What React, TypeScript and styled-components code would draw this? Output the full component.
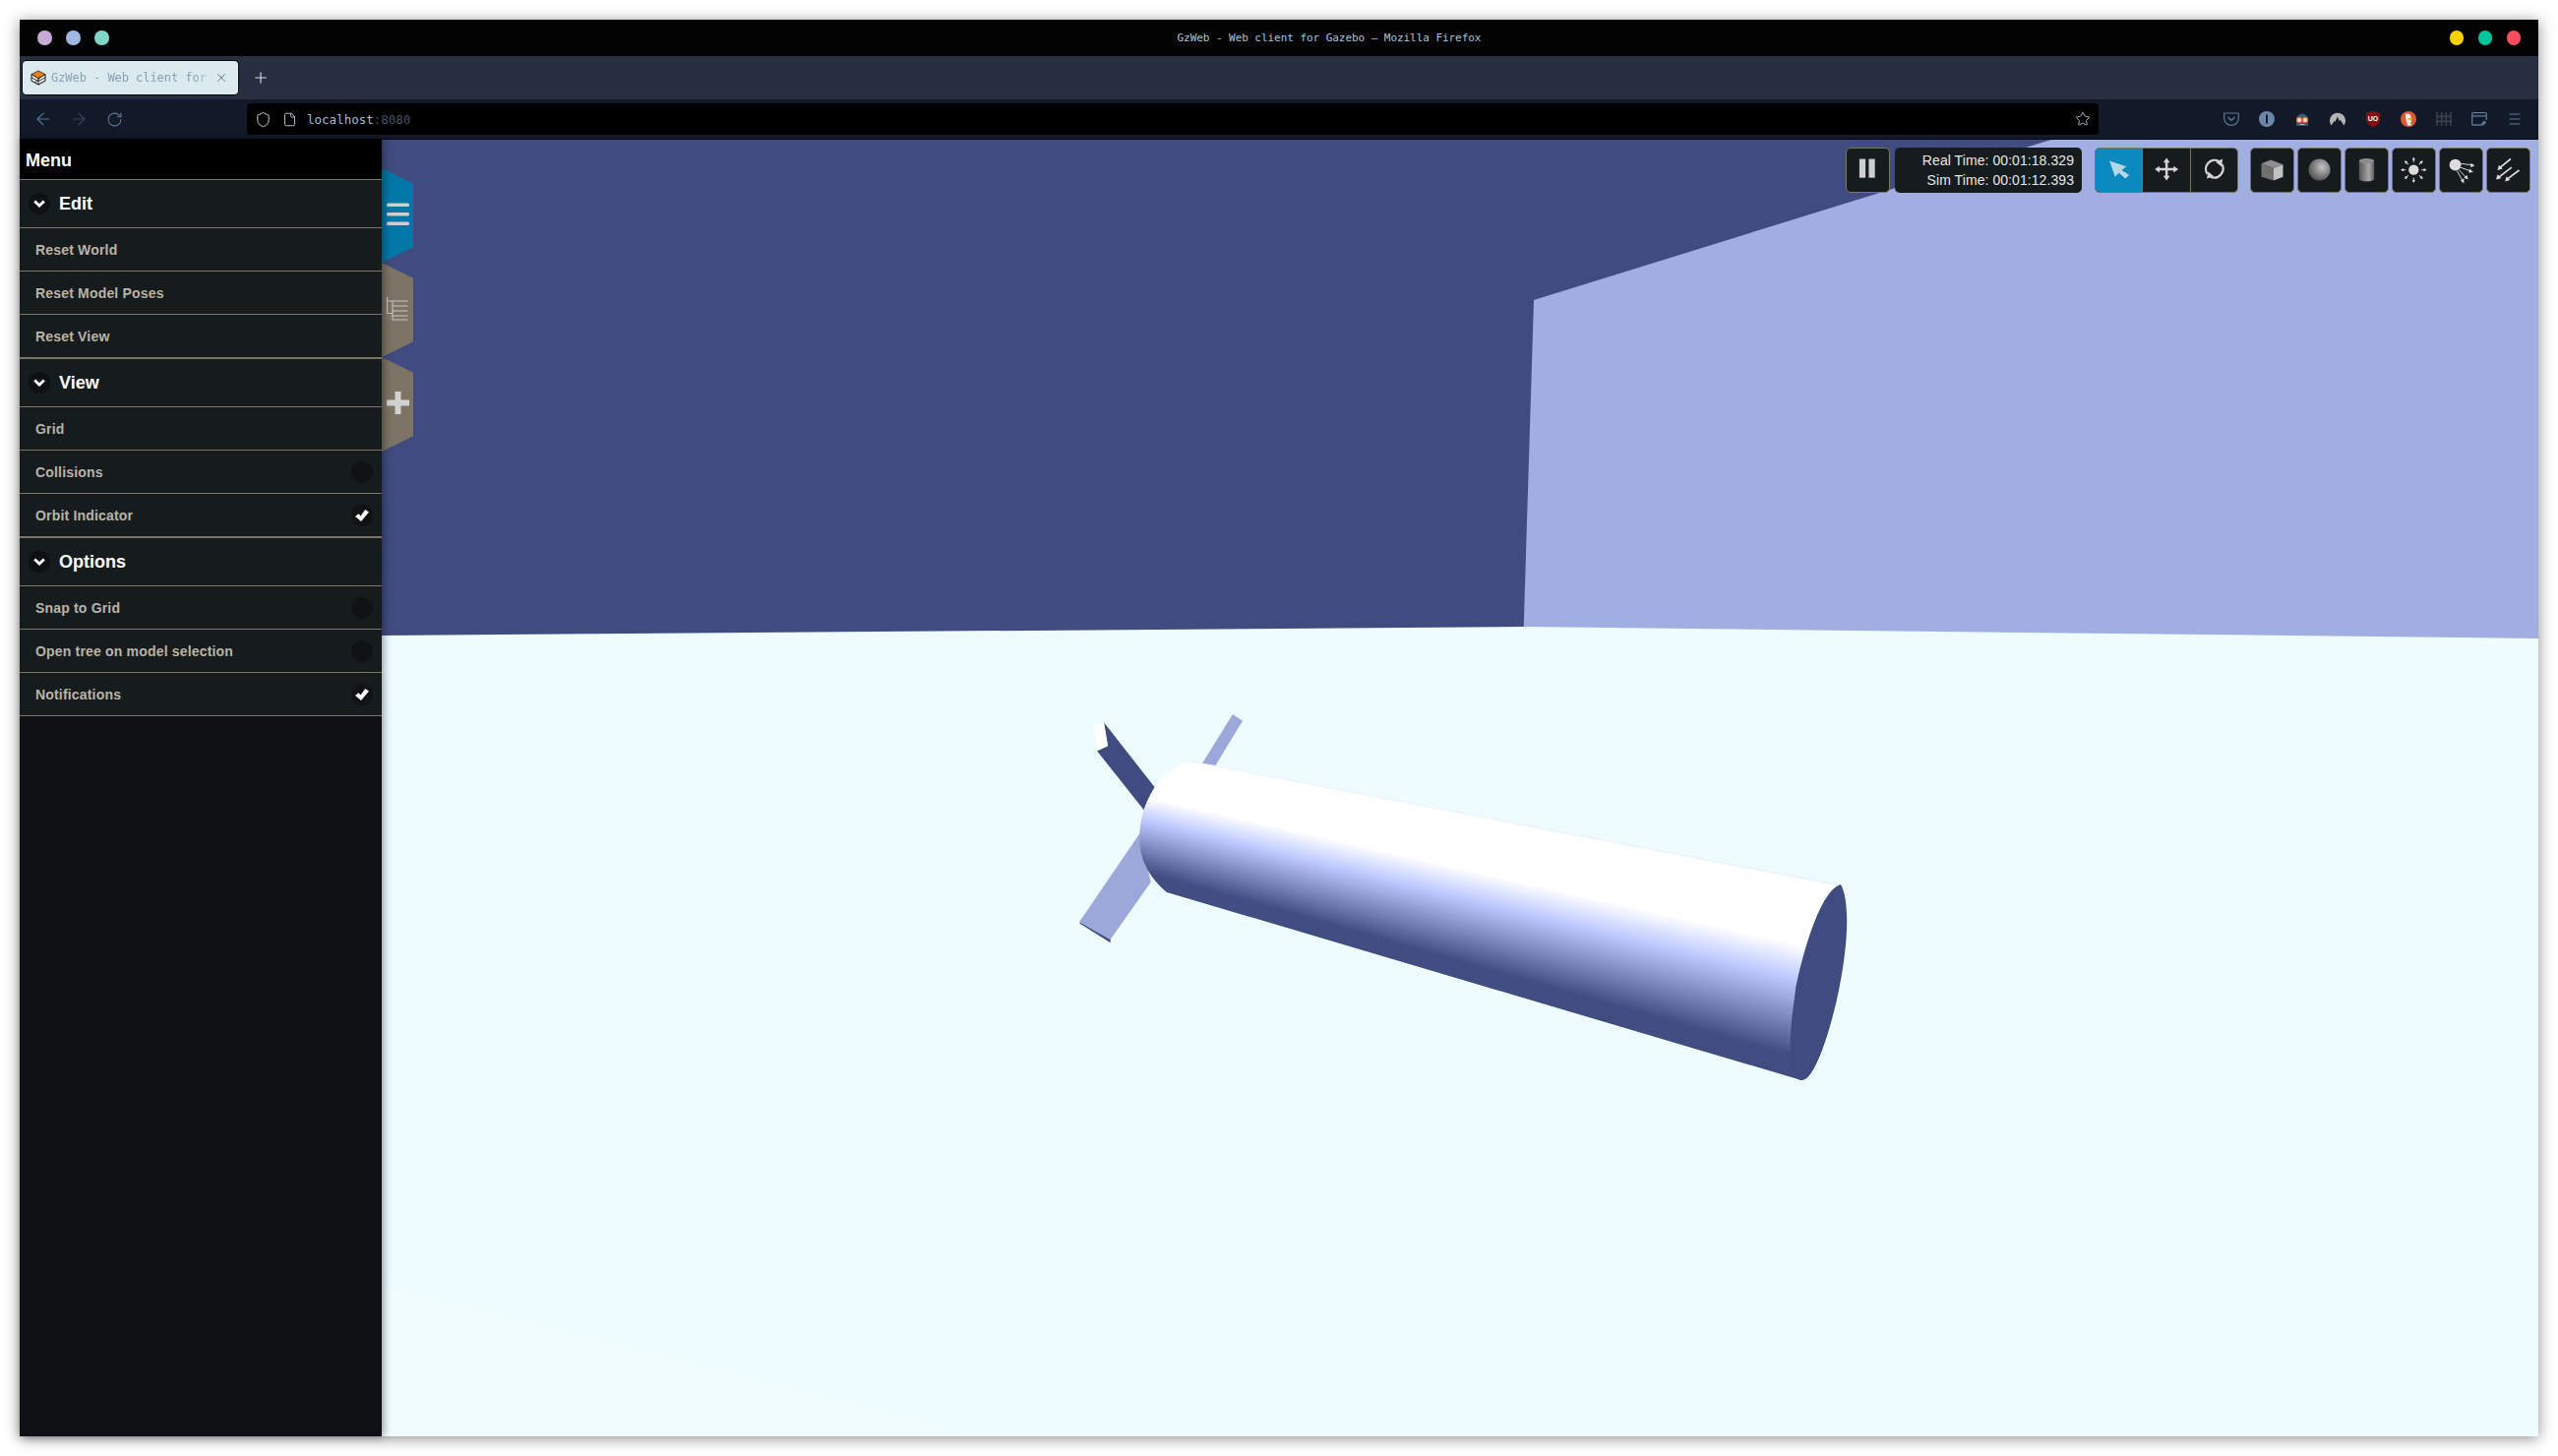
import React from 'react';
import styled, { createGlobalStyle } from 'styled-components';
import { ArrowLeft, ArrowRight, File, Plus, RotateCw, Shield, Star, X } from 'lucide-react';

const GlobalStyle = createGlobalStyle`
  html, body {
    margin: 0;
    background: #fff;
    font-family: "Liberation Sans", Arial, sans-serif;
    overflow: hidden;
  }
`;

const Window = styled.div`
  width: 2560px;
  height: 1440px;
  margin: 20px;
  display: flex;
  flex-direction: column;
  box-shadow: 0 2px 14px rgba(0, 0, 0, 0.45);
`;

/* browser chrome */
const TitleBar = styled.div`
  height: 37px;
  flex: none;
  background: #030303;
  display: flex;
  align-items: center;
  padding: 0 18px;
`;

const Dots = styled.div`
  display: flex;
  gap: 14.5px;
`;

const Dot = styled.span<{ $color: string }>`
  width: 14.5px;
  height: 14.5px;
  border-radius: 50%;
  background: ${p => p.$color};
`;

const WindowTitle = styled.div`
  margin-left: 1086px;
  margin-right: auto;
  font: 11px "DejaVu Sans Mono", monospace;
  letter-spacing: -0.05px;
  color: #a9c3d6;
  white-space: nowrap;
`;

const TabStrip = styled.div`
  height: 44px;
  flex: none;
  background: #272e3f;
  display: flex;
  align-items: center;
  padding-left: 3px;
`;

const Tab = styled.div`
  width: 219px;
  height: 34px;
  box-sizing: border-box;
  background: #dbeaec;
  border-radius: 4px;
  box-shadow: 0 0 0 1px #05070c;
  display: flex;
  align-items: center;
  padding-left: 8px;
  color: #8a9fb8;
`;

const TabTitle = styled.span`
  width: 166px;
  margin-left: 5px;
  overflow: hidden;
  white-space: nowrap;
  font: 12px "DejaVu Sans Mono", monospace;
  letter-spacing: -0.05px;
  -webkit-mask-image: linear-gradient(to right, #000 88%, transparent 100%);
  mask-image: linear-gradient(to right, #000 88%, transparent 100%);
`;

const NewTab = styled.div`
  margin-left: 14px;
  display: flex;
  color: #d3dbe4;
`;

const NavBar = styled.div`
  height: 40px;
  flex: none;
  box-sizing: border-box;
  background: #121a2a;
  display: flex;
  align-items: center;
  padding-left: 6px;
`;

const NavIcon = styled.div<{ $color?: string }>`
  width: 36px;
  height: 36px;
  flex: none;
  display: flex;
  align-items: center;
  justify-content: center;
  color: ${p => p.$color || '#5d7894'};
`;

const UrlBar = styled.div`
  width: 1882px;
  height: 32px;
  margin-left: 117px;
  flex: none;
  background: #000;
  border-radius: 4px;
  display: flex;
  align-items: center;
  padding: 0 8px 0 8px;
  box-sizing: border-box;
  color: #c9d4dc;
`;

const UrlPage = styled.div`
  margin-left: 11px;
  display: flex;
`;

const UrlHost = styled.span`
  margin-left: 10px;
  font: 12.5px "DejaVu Sans Mono", monospace;
  color: #aebbc7;
`;

const UrlPort = styled.span`
  color: #44546a;
`;

const UrlStar = styled.div`
  margin-left: auto;
  display: flex;
  color: #a8c0cc;
`;

const Extensions = styled.div`
  margin-left: 117px;
  display: flex;
`;

/* page */
const Workspace = styled.div`
  flex: 1;
  display: flex;
  min-height: 0;
`;

const Sidebar = styled.div`
  width: 368px;
  flex: none;
  position: relative;
  z-index: 2;
  background: #0e1014;
  box-shadow: 2px 0 8px rgba(0, 0, 0, 0.4);
  color: #fff;
`;

const MenuHeader = styled.div`
  height: 42px;
  box-sizing: border-box;
  background: #000;
  border-bottom: 1px solid #7d7466;
  display: flex;
  align-items: center;
  padding: 3px 0 0 6px;
  font-size: 18px;
  font-weight: bold;
`;

const SectionHeader = styled.div`
  height: 49px;
  box-sizing: border-box;
  background: #161c1d;
  border-bottom: 1px solid #7d7466;
  display: flex;
  align-items: center;
  padding-left: 9px;
  font-size: 18px;
  font-weight: bold;
`;

const ChevronBadge = styled.span`
  width: 22px;
  height: 22px;
  margin-right: 9px;
  border-radius: 50%;
  background: #0e1114;
  display: flex;
  align-items: center;
  justify-content: center;
`;

const Item = styled.div<{ $last?: boolean }>`
  height: ${p => (p.$last ? 45 : 44)}px;
  box-sizing: border-box;
  background: #161c1d;
  border-bottom: ${p => (p.$last ? 2 : 1)}px solid #7d7466;
  display: flex;
  align-items: center;
  justify-content: space-between;
  padding: 0 9px 0 16px;
  font-size: 14px;
  font-weight: bold;
  letter-spacing: 0.18px;
  color: #b9b3a6;
`;

const CheckBadge = styled.span`
  width: 22px;
  height: 22px;
  border-radius: 50%;
  background: #0f1314;
  display: flex;
  align-items: center;
  justify-content: center;
`;

const Viewport = styled.div`
  flex: 1;
  position: relative;
  overflow: hidden;
  background: #404c80;

  &::before {
    content: '';
    position: absolute;
    top: 0;
    left: 0;
    right: 0;
    height: 1px;
    background: #05070c;
    z-index: 1;
  }
`;

const Scene = styled.svg`
  position: absolute;
  inset: 0;
  width: 100%;
  height: 100%;
  display: block;
`;

const HexTabs = styled.div`
  position: absolute;
  top: 30px;
  left: 0;
  display: flex;
  flex-direction: column;
`;

const HexTab = styled.div<{ $active?: boolean }>`
  width: 32px;
  height: 96px;
  box-sizing: border-box;
  padding-bottom: 3px;
  background: ${p => (p.$active ? '#0278a6' : '#7d7466')};
  clip-path: polygon(0 0, 100% 16.5%, 100% 83.5%, 0 100%);
  display: flex;
  align-items: center;
  justify-content: center;
`;

const Toolbar = styled.div`
  position: absolute;
  top: 9px;
  right: 8px;
  height: 46px;
  display: flex;
`;

const ToolButton = styled.div<{ $gap?: number }>`
  width: 45px;
  height: 46px;
  box-sizing: border-box;
  background: #161c1d;
  border: 1px solid #7d7466;
  border-radius: 5px;
  margin-left: ${p => p.$gap ?? 3}px;
  overflow: hidden;
`;

const TimeBox = styled.div`
  width: 190px;
  height: 46px;
  margin-left: 5px;
  box-sizing: border-box;
  background: #161c1d;
  border-radius: 5px;
  padding-right: 8px;
  display: flex;
  flex-direction: column;
  justify-content: center;
  text-align: right;
  font-size: 14px;
  line-height: 20px;
  letter-spacing: 0.07px;
  color: #e6e6e6;
`;

const ModeGroup = styled.div`
  width: 146px;
  height: 46px;
  margin: 0 9px 0 13px;
  box-sizing: border-box;
  background: #161c1d;
  border: 1px solid #7d7466;
  border-radius: 5px;
  display: flex;
  overflow: hidden;
`;

const ModeButton = styled.div<{ $active?: boolean }>`
  flex: 1;
  background: ${p => (p.$active ? '#0b8abf' : 'transparent')};
  & + & {
    border-left: 1px solid #7d7466;
  }
`;

const ToolIcon = styled.svg`
  display: block;
  width: 100%;
  height: 100%;
`;

/* rocket body, shaded in strips running from the near end to the far end */
const lerp = (a: number, b: number, t: number) => a + (b - a) * t;

const SHADE: [number, number[]][] = [
  [0, [228, 234, 255]],
  [0.015, [255, 255, 255]],
  [0.34, [255, 255, 255]],
  [0.52, [188, 201, 255]],
  [0.9, [64, 76, 128]],
  [1, [64, 76, 128]],
];

const shadeAt = (t: number) => {
  let i = 0;
  while (i < SHADE.length - 2 && t > SHADE[i + 1][0]) i++;
  const [t0, c0] = SHADE[i];
  const [t1, c1] = SHADE[i + 1];
  const k = Math.min(1, Math.max(0, (t - t0) / (t1 - t0)));
  return `rgb(${c0.map((c, n) => Math.round(lerp(c, c1[n], k))).join(',')})`;
};

const edgePoint = (t: number) => {
  const lx = lerp(1208, 1186, t);
  const ly = lerp(773, 907, t);
  const rx = lerp(1871, 1831, t);
  const ry = lerp(899, 1098, t);
  return [lx - 0.12 * (rx - lx), ly - 0.12 * (ry - ly), rx + 0.05 * (rx - lx), ry + 0.05 * (ry - ly)];
};

const STRIPS = Array.from({ length: 90 }, (_, i) => {
  const a = edgePoint(i / 90);
  const b = edgePoint((i + 1) / 90);
  return {
    points: `${a[0]},${a[1]} ${a[2]},${a[3]} ${b[2]},${b[3]} ${b[0]},${b[1]}`,
    color: shadeAt((i + 0.5) / 90),
  };
});

const WorldScene = () => (
  <Scene viewBox="388 141 2192 1319" preserveAspectRatio="none">
    <defs>
      <clipPath id="rocketBody">
        <path d="M1208 773 L1871 899 C1880 915 1880 960 1866 1020 C1855 1065 1842 1098 1831 1098 L1186 907 C1166 890 1158 870 1158.7 853 C1158 825 1170 790 1208 773 Z" />
      </clipPath>
    </defs>
    <rect x="388" y="141" width="2192" height="1319" fill="#404c80" />
    <polygon points="2088,141 2580,141 2580,660 1548,660 1559,305" fill="#a1aee1" />
    <polygon points="388,646 1548,637 2580,649 2580,1460 388,1460" fill="#eefcff" />
    <polygon points="388,1310 928,1443 985,1460 388,1460" fill="#f1fcff" />

    <polygon points="1253,726 1263,732.7 1235.5,778 1222,776" fill="#9ca8da" />
    <polygon points="1122,734.3 1173.5,800 1162.6,823.3 1115,763.3 1126,758.3" fill="#404c80" />
    <polygon points="1112,737.3 1122,734.3 1126,758.3 1115,763.3" fill="#fff" />
    <polygon points="1158.7,846.7 1169.7,896.7 1128.6,955 1097,937.3" fill="#9ca8da" />
    <polygon points="1097,937.3 1128.6,955 1128.6,958.3 1098.4,939.3" fill="#404c80" />

    <g clipPath="url(#rocketBody)">
      {STRIPS.map(s => (
        <polygon key={s.points} points={s.points} fill={s.color} stroke={s.color} strokeWidth="0.8" />
      ))}
    </g>
    <path
      d="M1871 899 C1880 915 1880 960 1866 1020 C1855 1065 1842 1098 1831 1098 C1824 1098 1819 1085 1819.7 1066 C1820 1040 1822 1030 1825 1006 C1832 970 1850 905 1871 899 Z"
      fill="#404c80"
    />
  </Scene>
);

/* small drawings */
const Favicon = () => (
  <svg width="16" height="16" viewBox="0 0 16 16">
    <path d="M1 4.5 L8 8.5 L15 4.5 V11 L8 15 L1 11 Z" fill="#f4f4f4" stroke="#2c2c2c" strokeWidth="1.1" strokeLinejoin="round" />
    <path d="M1 7.8 L8 11.6 L15 7.8 M8 8.5 V15 M4.4 13 L11 7" fill="none" stroke="#2c2c2c" strokeWidth="1" />
    <path d="M8 1 L15 4.5 L8 8.5 L1 4.5 Z" fill="#f07d10" stroke="#2c2c2c" strokeWidth="0.8" strokeLinejoin="round" />
  </svg>
);

const ChevronIcon = () => (
  <svg width="12" height="8" viewBox="0 0 12 8">
    <path d="M1.2 1.4 L6 6 L10.8 1.4" fill="none" stroke="#fff" strokeWidth="2.8" />
  </svg>
);

const CheckIcon = () => (
  <svg width="14" height="12" viewBox="0 0 14 12">
    <path d="M0 7 L3.4 4.2 L5.6 6.6 L10.2 0 L14 2.6 L6 12 Z" fill="#fff" />
  </svg>
);

const Hamburger = () => (
  <svg width="23" height="23" viewBox="0 0 23 23">
    <g fill="#cfcfcf">
      <rect y="0.5" width="23" height="3.4" rx="1.5" />
      <rect y="10" width="23" height="3.4" rx="1.5" />
      <rect y="19.5" width="23" height="3.4" rx="1.5" />
    </g>
  </svg>
);

const TreeIcon = () => (
  <svg width="22" height="24" viewBox="0 0 22 24" fill="none" stroke="#c9c6c0" strokeWidth="1.1">
    <path d="M0.6 0 V16.5 H6 V23 H21.5 M6 16.5 V4 H21.5 M6 9 H21.5 M6 14 H21.5 M6 19 H21.5 M0.6 4 H6" />
  </svg>
);

const PlusIcon = () => (
  <svg width="23" height="23" viewBox="0 0 23 23">
    <path d="M8.5 0 H14.5 V8.5 H23 V14.5 H14.5 V23 H8.5 V14.5 H0 V8.5 H8.5 Z" fill="#d2d2d2" />
  </svg>
);

const PauseIcon = () => (
  <ToolIcon viewBox="0 0 45 46">
    <rect x="13.5" y="11" width="6.5" height="20" fill="#cfcfcf" />
    <rect x="23.5" y="11" width="6.5" height="20" fill="#cfcfcf" />
  </ToolIcon>
);

const SelectIcon = () => (
  <ToolIcon viewBox="0 0 48 46">
    <polygon points="14,13 32,19 27,23 35,28 31,32 24,26 20,30" fill="#b6d7e6" />
  </ToolIcon>
);

const MoveIcon = () => (
  <ToolIcon viewBox="0 0 48 46">
    <path d="M24.5 13 V31 M15 22 H34" stroke="#d4d4d4" strokeWidth="2.6" fill="none" />
    <path d="M24.5 10 L28 15 H21 Z M24.5 34 L28 29 H21 Z M12 22 L17 18.5 V25.5 Z M37 22 L32 18.5 V25.5 Z" fill="#d4d4d4" />
  </ToolIcon>
);

const RotateIcon = () => (
  <ToolIcon viewBox="0 0 48 46">
    <path d="M16.5 27 A9.5 9.5 0 0 1 29 13.5 M32 16.5 A9.5 9.5 0 0 1 20 30" stroke="#d4d4d4" strokeWidth="2.4" fill="none" />
    <path d="M33 11 L31.5 19 L25.5 14.5 Z M16 32 L17.5 24.5 L23.5 29.5 Z" fill="#d4d4d4" />
  </ToolIcon>
);

const BoxIcon = () => (
  <ToolIcon viewBox="0 0 45 46">
    <polygon points="11,16 21,12 34,17 24,21" fill="#8f8f8f" />
    <polygon points="11,16 24,21 24,34 11,30" fill="#707070" />
    <polygon points="24,21 34,17 34,30 24,34" fill="#c2c2c2" />
  </ToolIcon>
);

const SphereIcon = () => (
  <ToolIcon viewBox="0 0 45 46">
    <defs>
      <radialGradient id="sphereShade" cx="0.62" cy="0.38" r="0.62">
        <stop offset="0" stopColor="#c4c4c4" />
        <stop offset="1" stopColor="#585858" />
      </radialGradient>
    </defs>
    <circle cx="22.5" cy="22.5" r="11.5" fill="url(#sphereShade)" />
  </ToolIcon>
);

const CylinderIcon = () => (
  <ToolIcon viewBox="0 0 45 46">
    <defs>
      <linearGradient id="cylinderShade" x1="0" x2="1" y1="0" y2="0">
        <stop offset="0" stopColor="#555" />
        <stop offset="0.65" stopColor="#a8a8a8" />
        <stop offset="1" stopColor="#5c5c5c" />
      </linearGradient>
    </defs>
    <path d="M14.5 13 V32 C14.5 36 30.5 36 30.5 32 V13 Z" fill="url(#cylinderShade)" />
    <ellipse cx="22.5" cy="13" rx="8" ry="2.6" fill="#8d8d8d" />
  </ToolIcon>
);

const SUN_RAYS = [0, 45, 90, 135, 180, 225, 270, 315];

const SunIcon = () => (
  <ToolIcon viewBox="0 0 45 46">
    <circle cx="22.3" cy="22.7" r="5.4" fill="#dcdcdc" />
    {SUN_RAYS.map(a => (
      <g key={a} transform={`rotate(${a} 22.3 22.7)`}>
        <path d="M22.3 14.5 V10" stroke="#dcdcdc" strokeWidth="1" />
        <path d="M22.3 8.8 L24 12 H20.6 Z" fill="#dcdcdc" />
      </g>
    ))}
  </ToolIcon>
);

const SpotIcon = () => (
  <ToolIcon viewBox="0 0 45 46">
    <circle cx="16.3" cy="17.3" r="6.2" fill="#dcdcdc" />
    <g stroke="#dcdcdc" strokeWidth="1" fill="none">
      <path d="M22 16 L34 17.5 M21.5 20 L33 24 M20 22.5 L28 31 M18 23.5 L24 34" />
    </g>
    <path d="M37 18 L33 15.5 L32.6 20 Z M35.5 25 L31.5 21.5 L30.5 25.5 Z M30 33 L28.8 28 L25.6 31 Z M25.5 37 L25.6 32 L21.8 34 Z" fill="#dcdcdc" />
  </ToolIcon>
);

const DirectionalIcon = () => (
  <ToolIcon viewBox="0 0 45 46">
    <g stroke="#dcdcdc" strokeWidth="1.8" fill="none">
      <path d="M25 11 L14 20 M26 20 L13 30 M34 23 L22 32" />
    </g>
    <path d="M11 23 L12.5 17.5 L16.5 21.5 Z M9.5 33 L11 27.5 L15 31.5 Z M19 35 L20.5 29.5 L24.5 33.5 Z" fill="#dcdcdc" />
  </ToolIcon>
);

const ExtensionIcons = [
  <svg key="pocket" width="16" height="14" viewBox="0 0 16 14" fill="none" stroke="#5d7894" strokeWidth="1.2">
    <path d="M1.5 1 H14.5 Q15.4 1 15.4 2 V6 A7.4 7.4 0 0 1 0.6 6 V2 Q0.6 1 1.5 1 Z" />
    <path d="M4.5 5 L8 8.3 L11.5 5" strokeWidth="1.4" />
  </svg>,
  <svg key="onepass" width="16" height="16" viewBox="0 0 16 16">
    <circle cx="8" cy="8" r="8" fill="#6a86a9" />
    <rect x="7" y="3.5" width="2" height="9" rx="0.5" fill="#121a2a" />
  </svg>,
  <svg key="goggles" width="16" height="16" viewBox="0 0 16 16">
    <path d="M2.5 8 A5.5 5.5 0 0 1 13.5 8 L14 15 H2 Z" fill="#2c5f6f" />
    <circle cx="5" cy="9" r="2.6" fill="#f4e3d8" stroke="#e2603f" strokeWidth="1.3" />
    <circle cx="11" cy="9" r="2.6" fill="#f4e3d8" stroke="#e2603f" strokeWidth="1.3" />
    <rect x="5.5" y="13" width="5" height="1" fill="#9fb4bc" />
  </svg>,
  <svg key="nord" width="16" height="14" viewBox="0 0 16 14">
    <path d="M1.6 13.5 A8 8 0 1 1 14.4 13.5 L10.5 7.5 L9.6 9.2 L8 4.5 L5.3 10 L4.5 9 Z" fill="#b4b4b4" />
  </svg>,
  <svg key="ublock" width="14" height="16" viewBox="0 0 14 16">
    <path d="M7 0 L14 1.8 V8.5 C14 12 10.5 14.5 7 16 C3.5 14.5 0 12 0 8.5 V1.8 Z" fill="#800f12" />
    <text x="7" y="9.8" textAnchor="middle" fontSize="7" fontWeight="bold" fill="#fff" fontFamily="Liberation Sans">UO</text>
  </svg>,
  <svg key="ddg" width="16" height="16" viewBox="0 0 16 16">
    <circle cx="8" cy="8" r="8" fill="#de5833" />
    <path d="M5 3 C8 1.6 10.6 3.6 10.6 6 L10.8 9 L11 14.5 H7.4 C6 11 4.4 6 5 3 Z" fill="#f7efe9" />
    <path d="M7.4 7 L11.8 6.4 L11.2 8.8 L7.8 9 Z" fill="#f2a531" />
    <path d="M9 12 L11.4 11 V13.5 Z" fill="#67a539" />
  </svg>,
  <svg key="grid" width="16" height="14" viewBox="0 0 16 14" stroke="#3c4048" strokeWidth="1.6" fill="none">
    <path d="M1 0 V14 M5.7 0 V14 M10.3 0 V14 M15 0 V14 M0 4.4 H16 M0 9.4 H16" />
  </svg>,
  <svg key="note" width="17" height="15" viewBox="0 0 17 15" fill="none" stroke="#5d7894" strokeWidth="1.3">
    <path d="M10 13 H2 Q0.7 13 0.7 11.7 V2 Q0.7 0.7 2 0.7 H14 Q15.3 0.7 15.3 2 V8" />
    <path d="M0.7 4 H15.3" />
    <path d="M9.5 12.5 L13 8.5 L15.3 10.6 L11.5 14 Z" fill="#5d7894" stroke="none" />
  </svg>,
  <svg key="menu" width="14" height="12" viewBox="0 0 14 12" stroke="#5d7894" strokeWidth="1.2">
    <path d="M1.5 1 H12.5 M1.5 6 H12.5 M1.5 11 H12.5" />
  </svg>,
];

type MenuItem = { label: string; checked?: boolean; toggle?: boolean };

const MENU: { title: string; items: MenuItem[] }[] = [
  {
    title: 'Edit',
    items: [{ label: 'Reset World' }, { label: 'Reset Model Poses' }, { label: 'Reset View' }],
  },
  {
    title: 'View',
    items: [
      { label: 'Grid' },
      { label: 'Collisions', toggle: true },
      { label: 'Orbit Indicator', toggle: true, checked: true },
    ],
  },
  {
    title: 'Options',
    items: [
      { label: 'Snap to Grid', toggle: true },
      { label: 'Open tree on model selection', toggle: true },
      { label: 'Notifications', toggle: true, checked: true },
    ],
  },
];

export default function App() {
  return (
    <>
      <GlobalStyle />
      <Window>
        <TitleBar>
          <Dots>
            <Dot $color="#c9a9d6" />
            <Dot $color="#9db8e2" />
            <Dot $color="#7fd6c6" />
          </Dots>
          <WindowTitle>GzWeb - Web client for Gazebo — Mozilla Firefox</WindowTitle>
          <Dots>
            <Dot $color="#ffd000" />
            <Dot $color="#00c49a" />
            <Dot $color="#ff4d5e" />
          </Dots>
        </TitleBar>
        <TabStrip>
          <Tab>
            <Favicon />
            <TabTitle>GzWeb - Web client for Gazebo</TabTitle>
            <X size={14} color="#5f7488" strokeWidth={1.5} />
          </Tab>
          <NewTab>
            <Plus size={18} strokeWidth={1.5} />
          </NewTab>
        </TabStrip>
        <NavBar>
          <NavIcon>
            <ArrowLeft size={20} strokeWidth={1.3} />
          </NavIcon>
          <NavIcon $color="#34465c">
            <ArrowRight size={20} strokeWidth={1.3} />
          </NavIcon>
          <NavIcon>
            <RotateCw size={17} strokeWidth={1.5} />
          </NavIcon>
          <UrlBar>
            <Shield size={17} strokeWidth={1.4} />
            <UrlPage>
              <File size={15} strokeWidth={1.4} />
            </UrlPage>
            <UrlHost>
              localhost<UrlPort>:8080</UrlPort>
            </UrlHost>
            <UrlStar>
              <Star size={16} strokeWidth={1.4} />
            </UrlStar>
          </UrlBar>
          <Extensions>
            {ExtensionIcons.map(icon => (
              <NavIcon key={icon.key}>{icon}</NavIcon>
            ))}
          </Extensions>
        </NavBar>
        <Workspace>
          <Sidebar>
            <MenuHeader>Menu</MenuHeader>
            {MENU.map(section => (
              <div key={section.title}>
                <SectionHeader>
                  <ChevronBadge>
                    <ChevronIcon />
                  </ChevronBadge>
                  {section.title}
                </SectionHeader>
                {section.items.map((item, i) => (
                  <Item key={item.label} $last={section.title !== 'Options' && i === section.items.length - 1}>
                    {item.label}
                    {item.toggle && <CheckBadge>{item.checked && <CheckIcon />}</CheckBadge>}
                  </Item>
                ))}
              </div>
            ))}
          </Sidebar>
          <Viewport>
            <WorldScene />
            <HexTabs>
              <HexTab $active>
                <Hamburger />
              </HexTab>
              <HexTab>
                <TreeIcon />
              </HexTab>
              <HexTab>
                <PlusIcon />
              </HexTab>
            </HexTabs>
            <Toolbar>
              <ToolButton $gap={0}>
                <PauseIcon />
              </ToolButton>
              <TimeBox>
                <div>Real Time: 00:01:18.329</div>
                <div>Sim Time: 00:01:12.393</div>
              </TimeBox>
              <ModeGroup>
                <ModeButton $active>
                  <SelectIcon />
                </ModeButton>
                <ModeButton>
                  <MoveIcon />
                </ModeButton>
                <ModeButton>
                  <RotateIcon />
                </ModeButton>
              </ModeGroup>
              <ToolButton>
                <BoxIcon />
              </ToolButton>
              <ToolButton>
                <SphereIcon />
              </ToolButton>
              <ToolButton>
                <CylinderIcon />
              </ToolButton>
              <ToolButton>
                <SunIcon />
              </ToolButton>
              <ToolButton>
                <SpotIcon />
              </ToolButton>
              <ToolButton>
                <DirectionalIcon />
              </ToolButton>
            </Toolbar>
          </Viewport>
        </Workspace>
      </Window>
    </>
  );
}
